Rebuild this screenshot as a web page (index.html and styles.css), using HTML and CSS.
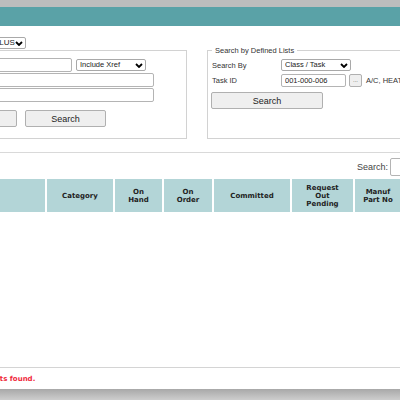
FILE: index.html
```html
<!DOCTYPE html>
<html lang="en">
<head>
 <meta charset="UTF-8">
 <meta name="viewport" content="width=device-width, initial-scale=1.0">
 <title>Part Search</title>
 <link rel="stylesheet" href="styles.css">
</head>
<body>
 <div class="top-strip"></div>
 <div class="window">
  <div class="title-bar"></div>
  <div class="page">
   <div class="filter-row">
    <select class="drop wide-drop"><option>SURPLUS</option></select>
   </div>

   <div class="search-boxes">
    <fieldset class="box left-box">
     <legend>Search by Part</legend>
     <div class="form-grid left-grid">
      <label>Part No</label>
      <div class="inline">
       <input type="text" class="txt part-input">
       <select class="drop xref-drop"><option>Include Xref</option></select>
      </div>
      <label>Description</label>
      <input type="text" class="txt long-input">
      <label>Manuf Part No</label>
      <input type="text" class="txt long-input">
      <div class="btn-row">
       <button class="btn">Clear</button>
       <button class="btn">Search</button>
      </div>
     </div>
    </fieldset>

    <fieldset class="box right-box">
     <legend>Search by Defined Lists</legend>
     <div class="form-grid right-grid">
      <label>Search By</label>
      <select class="drop list-drop"><option>Class / Task</option></select>
      <label>Task ID</label>
      <div class="inline">
       <input type="text" class="txt task-input" value="001-000-006">
       <button class="dots">...</button>
       <span class="task-name">A/C, HEATING &amp; VENTILATION</span>
      </div>
     </div>
     <button class="btn wide-btn">Search</button>
    </fieldset>
   </div>

   <div class="rule"></div>

   <div class="table-search">
    <label>Search:</label>
    <input type="text" class="txt table-input">
   </div>

   <table class="results">
    <thead>
     <tr>
      <th class="c-part">Part No</th>
      <th class="c-desc">Description</th>
      <th class="c-cat">Category</th>
      <th class="c-hand">On<br>Hand</th>
      <th class="c-order">On<br>Order</th>
      <th class="c-comm">Committed</th>
      <th class="c-req">Request<br>Out<br>Pending</th>
      <th class="c-manuf">Manuf<br>Part No</th>
      <th class="c-uom">UOM</th>
     </tr>
    </thead>
   </table>
  </div>

  <div class="footer">
   <div class="page">
    <p class="no-results">No results found.</p>
   </div>
  </div>
 </div>
 <div class="shade"></div>
</body>
</html>
```

FILE: styles.css
```css
html, body {
 margin: 0;
 height: 400px;
 overflow: hidden;
}

body {
 background: #c2c2c2;
 font-family: "Liberation Sans", Arial, sans-serif;
 color: #333;
}

.top-strip {
 height: 7px;
 background: #bdbdbd;
}

.window {
 height: 382px;
 background: #ffffff;
 display: flex;
 flex-direction: column;
}

.shade {
 height: 11px;
 background: linear-gradient(#a8a8a8, #cdcdcd);
}

.title-bar {
 height: 19px;
 background: #5aa2a7;
 flex: none;
}

/* the page is wider than the window and scrolled to the right */
.page {
 margin-left: -200px;
 width: 760px;
}

.window > .page {
 flex: 1;
}

.filter-row {
 padding: 5px 0 0 173px;
 height: 12px;
}

/* form controls */
.drop {
 appearance: none;
 -webkit-appearance: none;
 box-sizing: border-box;
 height: 12px;
 margin: 0;
 padding: 0 0 0 3px;
 border: 1px solid #a9a9a9;
 border-radius: 2px;
 background: #fff url("data:image/svg+xml,%3Csvg xmlns='http://www.w3.org/2000/svg' width='8' height='5'%3E%3Cpath d='M1 1l3 3 3-3' fill='none' stroke='%23000' stroke-width='1.8'/%3E%3C/svg%3E") no-repeat right 2px center;
 font-family: "Liberation Sans", Arial, sans-serif;
 font-size: 7.5px;
 line-height: 10px;
 color: #222;
}

.wide-drop {
 width: 53px;
 font-size: 8px;
}

.txt {
 box-sizing: border-box;
 height: 14px;
 margin: 0;
 padding: 0 3px;
 border: 1px solid #b4b4b4;
 border-radius: 2px;
 font-family: "Liberation Sans", Arial, sans-serif;
 font-size: 7.5px;
 color: #222;
}

.btn {
 box-sizing: border-box;
 width: 81px;
 height: 17px;
 margin: 0;
 padding: 0;
 border: 1px solid #b0b0b0;
 border-radius: 2px;
 background: #efefef;
 font-family: "Liberation Sans", Arial, sans-serif;
 font-size: 9px;
 color: #222;
}

/* the two search boxes */
.search-boxes {
 display: flex;
 gap: 20px;
 margin-top: 3px;
}

.box {
 flex: none;
 box-sizing: border-box;
 margin: 0;
 padding: 3px 4px 11px;
 border: 1px solid #d2d2d2;
}

.box legend {
 padding: 0 3px;
 font-size: 7.5px;
 line-height: 9px;
 color: #333;
}

.left-box {
 margin-left: 10px;
 width: 377px;
}

.right-box {
 width: 300px;
}

.form-grid {
 display: grid;
 grid-template-rows: repeat(3, 14px) auto;
 row-gap: 1px;
 align-items: center;
 font-size: 7.5px;
}

.left-grid {
 grid-template-columns: 115px auto;
}

.right-grid {
 grid-template-columns: 69px auto;
 grid-template-rows: repeat(2, 14px);
}

.inline {
 display: flex;
 align-items: center;
 white-space: nowrap;
}

.part-input {
 width: 142px;
}

.xref-drop {
 width: 70px;
 margin-left: 4px;
}

.long-input {
 width: 224px;
}

.btn-row {
 grid-column: 2;
 display: flex;
 gap: 8px;
 margin: 7px 0 0 6px;
}

.list-drop {
 width: 70px;
}

.task-input {
 width: 65px;
 height: 13px;
}

.dots {
 box-sizing: border-box;
 width: 13px;
 height: 13px;
 margin: 0 4px 0 3px;
 padding: 0;
 border: 1px solid #b0b0b0;
 border-radius: 2px;
 background: #efefef;
 font-size: 6px;
 color: #555;
}

.task-name {
 font-size: 7.5px;
 color: #333;
}

.wide-btn {
 display: block;
 width: 112px;
 margin: 5px 0 0 -1px;
}

.rule {
 height: 1px;
 margin-top: 13px;
 background: #d9d9d9;
}

.table-search {
 display: flex;
 justify-content: flex-end;
 align-items: center;
 gap: 2px;
 margin-top: 5px;
 padding-right: 70px;
 font-size: 9px;
 color: #444;
}

.table-input {
 width: 100px;
 height: 18px;
}

/* results table */
.results {
 margin-top: 3px;
 border-collapse: separate;
 border-spacing: 2px 0;
 table-layout: fixed;
 width: 665px;
}

.results th {
 height: 33px;
 padding: 0;
 background: #b3d5d7;
 font-family: "DejaVu Sans", Verdana, sans-serif;
 font-size: 7px;
 line-height: 8px;
 font-weight: bold;
 color: #222;
 text-align: center;
 vertical-align: middle;
}

.c-part { width: 78px; }
.c-desc { width: 163px; }
.c-cat { width: 66px; }
.c-hand { width: 47px; }
.c-order { width: 48px; }
.c-comm { width: 76px; }
.c-req { width: 61px; }
.c-manuf { width: 46px; }
.c-uom { width: 60px; }

.footer {
 height: 21px;
 border-top: 1px solid #d4d4d4;
 flex: none;
}

.no-results {
 margin: 0;
 padding: 7px 0 0 167px;
 font-family: "DejaVu Sans", Verdana, sans-serif;
 font-size: 7px;
 line-height: 9px;
 font-weight: bold;
 color: #f0283a;
}
```
